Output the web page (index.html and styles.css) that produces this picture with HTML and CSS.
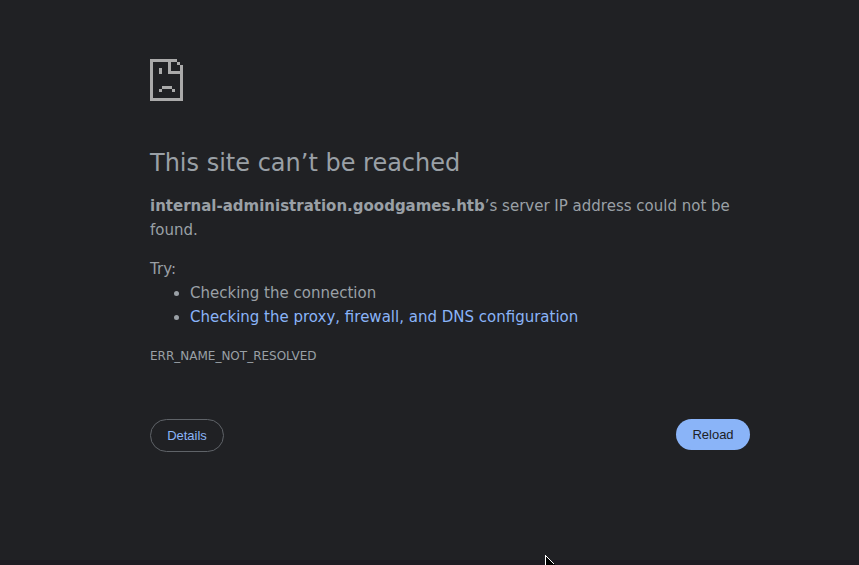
FILE: index.html
```
<!DOCTYPE html>
<html lang="en">
<head>
<meta charset="utf-8">
<title>This site can’t be reached</title>
<link rel="stylesheet" href="styles.css">
</head>
<body>
<main class="page">
  <svg class="icon" width="33" height="42" viewBox="0 0 33 42" shape-rendering="crispEdges">
    <path fill="#aaaaaa" d="M0 0H27V3H21V12H30V6H33V42H0ZM3 3V39H30V15H18V3ZM27 3H30V6H27ZM9 9H12V15H9ZM12 27H22V30H12ZM9 30H12V33H9ZM22 30H25V33H22Z"/>
  </svg>
  <h1>This site can’t be reached</h1>
  <p class="summary"><strong>internal-administration.goodgames.htb</strong>’s server IP address could not be found.</p>
  <div class="suggestions">
    <p>Try:</p>
    <ul>
      <li>Checking the connection</li>
      <li><a href="#">Checking the proxy, firewall, and DNS configuration</a></li>
    </ul>
  </div>
  <div class="code">ERR_NAME_NOT_RESOLVED</div>
  <div class="buttons">
    <button class="details">Details</button>
    <button class="reload">Reload</button>
  </div>
</main>
<div class="edge"></div>
<svg class="cursor" width="12" height="10" viewBox="0 0 12 10" shape-rendering="crispEdges"><path d="M0 0V10H10Z" fill="#000"/><path fill="#fff" d="M0 0H1V10H0ZM1 1h1v1h1v1h1v1h1v1h1v1h1v1h1v1h1v1h-1v-1h-1v-1h-1v-1h-1v-1h-1v-1h-1v-1h-1v-1h-1Z"/></svg>
</body>
</html>
```
FILE: styles.css
```
body {
  margin: 0;
  height: 565px;
  overflow: hidden;
  background: #202124;
  color: #9aa0a6;
  font: 15px/24px "DejaVu Sans", sans-serif;
  display: flex;
  flex-direction: column;
}
.page {
  width: 600px;
  margin: 0 0 0 150px;
  padding-top: 59px;
  flex: 1;
}
.icon { display: block; }
h1 {
  margin: 47px 0 16px;
  font-size: 24px;
  line-height: 30px;
  font-weight: 400;
}
p { margin: 0; }
.suggestions { margin-top: 15px; }
ul { margin: 0; padding-left: 40px; }
a { color: #8ab4f8; text-decoration: none; }
.code { margin-top: 15px; font-size: 12px; }
.buttons {
  display: flex;
  justify-content: space-between;
  align-items: flex-start;
  margin-top: 51px;
}
button {
  box-sizing: border-box;
  width: 74px;
  height: 31px;
  padding: 0;
  border: 0;
  border-radius: 17px;
  background: #8ab4f8;
  color: #202124;
  font: 13px "Liberation Sans", sans-serif;
}
.details {
  height: 33px;
  border: 1px solid #5f6368;
  background: transparent;
  color: #8ab4f8;
}
.edge { height: 5px; background: #1f1a22; }
.cursor { position: absolute; left: 545px; top: 555px; }
```
